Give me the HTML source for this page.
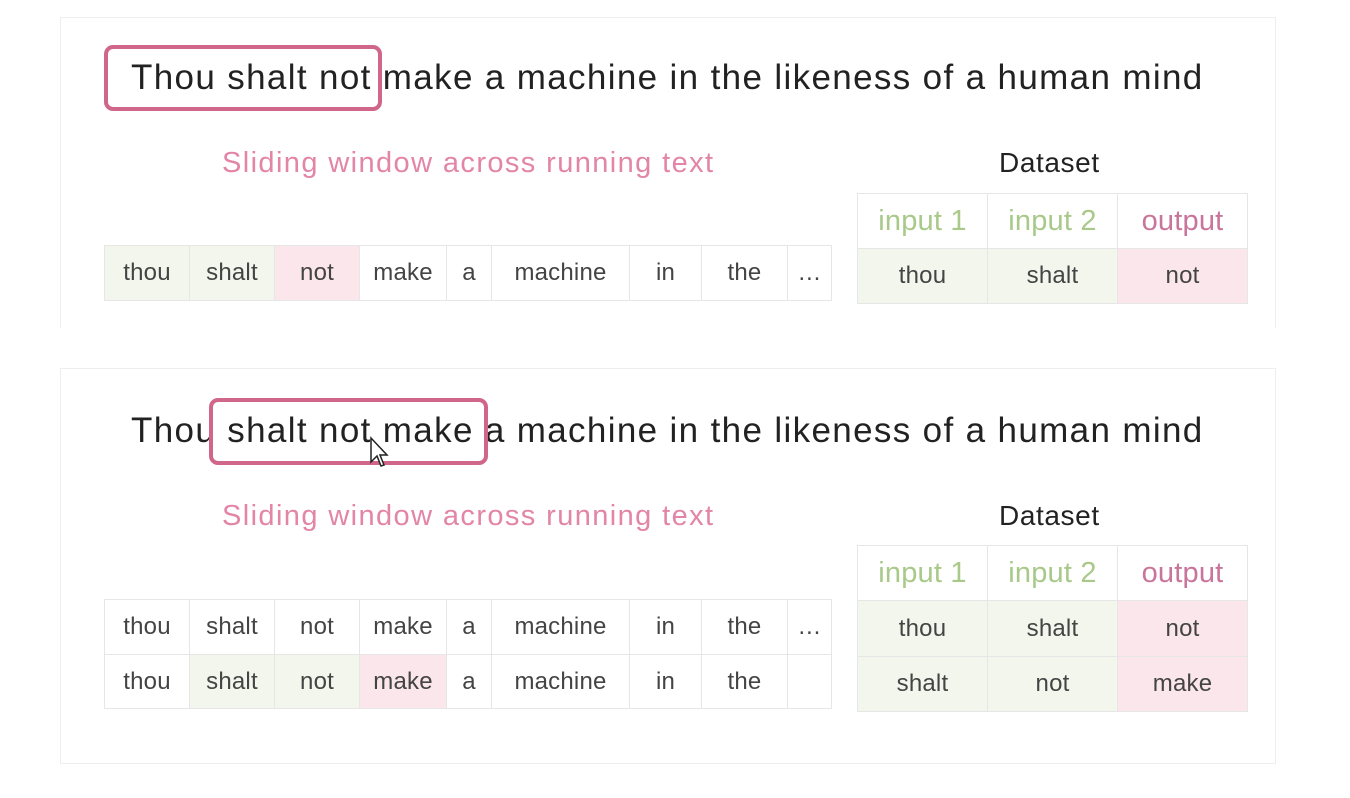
<!DOCTYPE html>
<html><head><style>
body{margin:0;width:1350px;height:798px;background:#fff;position:relative;font-family:"Liberation Sans",sans-serif;overflow:hidden}
.a{position:absolute}
.panel{position:absolute;left:60px;width:1214px;border:1px solid #eee;background:#fff}
.t{position:absolute;font-size:35px;letter-spacing:1.35px;color:#222;white-space:nowrap;line-height:40px}
.box{position:absolute;border:4px solid #d0668a;border-radius:9px;box-sizing:border-box}
.sub{position:absolute;font-size:29px;letter-spacing:1.4px;color:#e385a6;white-space:nowrap;line-height:32px}
.ds{position:absolute;font-size:28px;letter-spacing:0.6px;color:#222;line-height:32px}
.c{position:absolute;box-sizing:border-box;border:1px solid #e6e6e6;display:flex;align-items:center;justify-content:center;font-size:24px;letter-spacing:0.2px;color:#444}
.g{background:#f3f6ec}.p{background:#fbe6ec}
.hg{color:#a9c98a;font-size:29px}.hp{color:#c9749a;font-size:29px}
</style></head><body>
<div class="panel" style="top:17px;height:310px;border-bottom:none"></div>
<div class="panel" style="top:368px;height:394px"></div>

<div class="t" style="left:131px;top:58px">Thou shalt not make a machine in the likeness of a human mind</div>
<div class="box" style="left:104px;top:45px;width:278px;height:66px"></div>
<div class="sub" style="left:222px;top:147px">Sliding window across running text</div>
<div class="ds" style="left:999px;top:147px">Dataset</div>

<div class="t" style="left:131px;top:411px">Thou shalt not make a machine in the likeness of a human mind</div>
<div class="box" style="left:209px;top:398px;width:279px;height:67px"></div>
<div class="sub" style="left:222px;top:500px">Sliding window across running text</div>
<div class="ds" style="left:999px;top:500px">Dataset</div>

<div id="s"></div>
<script>
var xs=[104,189,274,359,446,491,629,701,787,831];
var w=["thou","shalt","not","make","a","machine","in","the","…"];
function row(y,h,words,cls){var o="";for(var i=0;i<9;i++){o+='<div class="c '+(cls[i]||"")+'" style="left:'+xs[i]+'px;top:'+y+'px;width:'+(xs[i+1]-xs[i]+1)+'px;height:'+h+'px">'+words[i]+'</div>'}return o}
var h="";
h+=row(245,56,w,["g","g","p"]);
h+=row(599,56,w,[]);
h+=row(654,55,["thou","shalt","not","make","a","machine","in","the",""],["","g","g","p"]);
var tx=[857,987,1117,1247];
function trow(y,hh,words,cls){var o="";for(var i=0;i<3;i++){o+='<div class="c '+cls[i]+'" style="left:'+tx[i]+'px;top:'+y+'px;width:'+(tx[i+1]-tx[i]+1)+'px;height:'+hh+'px">'+words[i]+'</div>'}return o}
h+=trow(193,56,["input 1","input 2","output"],["hg","hg","hp"]);
h+=trow(248,56,["thou","shalt","not"],["g","g","p"]);
h+=trow(545,56,["input 1","input 2","output"],["hg","hg","hp"]);
h+=trow(600,57,["thou","shalt","not"],["g","g","p"]);
h+=trow(656,56,["shalt","not","make"],["g","g","p"]);
document.getElementById("s").innerHTML=h;
</script>
<svg class="a" style="left:369px;top:436px" width="20" height="34" viewBox="0 0 20 34"><path d="M2 2 L2 26 L8 20 L12 30 L15 29 L11 19 L18 19 Z" fill="#fff" stroke="#222" stroke-width="1.5"/></svg>
</body></html>
